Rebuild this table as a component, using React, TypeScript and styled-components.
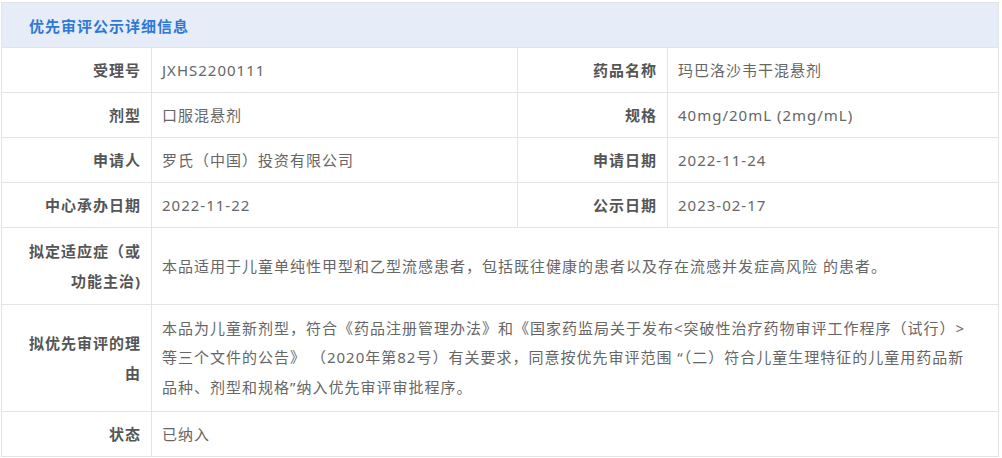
import styled, { createGlobalStyle } from "styled-components";

const GlobalStyle = createGlobalStyle`
  html, body {
    margin: 0;
    padding: 0;
    background: #fff;
  }
  body {
    font-family: "Noto Sans", "Noto Sans CJK SC", sans-serif;
  }
`;

const Page = styled.div`
  padding: 2px 3px 1px 1px;
`;

const Panel = styled.div`
  border: 1px solid #e4e4e4;
  border-bottom: none;
`;

const Header = styled.div`
  height: 44px;
  display: flex;
  align-items: center;
  padding-left: 27px;
  background: #e6edf9;
  border-bottom: 1px solid #e4e4e4;
  color: #2f78d6;
  font-size: 15px;
  letter-spacing: 1px;
  font-weight: bold;
`;

const Grid = styled.div`
  display: grid;
  grid-template-columns: 150px 366px 150px 1fr;
`;

const Label = styled.div<{ $lines?: number }>`
  display: flex;
  align-items: center;
  justify-content: flex-end;
  text-align: right;
  min-height: ${(p) => (p.$lines && p.$lines > 1 ? 30 * p.$lines + 16 : 44)}px;
  padding: 0 10px 0 12px;
  border-right: 1px solid #e4e4e4;
  border-bottom: 1px solid #e4e4e4;
  color: #555;
  font-size: 15px;
  letter-spacing: 1px;
  font-weight: bold;
  line-height: 30px;
`;

const Value = styled.div<{ $span?: boolean; $lines?: number }>`
  grid-column: ${(p) => (p.$span ? "span 3" : "auto")};
  display: flex;
  align-items: center;
  min-height: ${(p) => (p.$lines && p.$lines > 1 ? 30 * p.$lines + 16 : 44)}px;
  padding: 0 ${(p) => (p.$span ? 20 : 14)}px 0 10px;
  border-right: ${(p) => (p.$span ? "none" : "1px solid #e4e4e4")};
  border-bottom: 1px solid #e4e4e4;
  color: #666;
  font-size: 15px;
  letter-spacing: 1px;
  line-height: 30px;
  &:nth-child(4n) {
    border-right: none;
  }
`;

const Reason = styled.div`
  line-height: 29.5px;
`;

export default function App() {
  return (
    <Page>
      <GlobalStyle />
      <Panel>
        <Header>优先审评公示详细信息</Header>
        <Grid>
          <Label>受理号</Label>
          <Value>JXHS2200111</Value>
          <Label>药品名称</Label>
          <Value>玛巴洛沙韦干混悬剂</Value>

          <Label>剂型</Label>
          <Value>口服混悬剂</Value>
          <Label>规格</Label>
          <Value>40mg/20mL (2mg/mL)</Value>

          <Label>申请人</Label>
          <Value>罗氏（中国）投资有限公司</Value>
          <Label>申请日期</Label>
          <Value>2022-11-24</Value>

          <Label>中心承办日期</Label>
          <Value>2022-11-22</Value>
          <Label>公示日期</Label>
          <Value>2023-02-17</Value>

          <Label $lines={2}>拟定适应症（或功能主治)</Label>
          <Value $span $lines={2}>
            本品适用于儿童单纯性甲型和乙型流感患者，包括既往健康的患者以及存在流感并发症高风险 的患者。
          </Value>

          <Label $lines={3}>拟优先审评的理由</Label>
          <Value $span $lines={3}>
            <Reason>
              本品为儿童新剂型，符合《药品注册管理办法》和《国家药监局关于发布&lt;突破性治疗药物审评工作程序（试行）&gt;等三个文件的公告》 （2020年第82号）有关要求，同意按优先审评范围 “（二）符合儿童生理特征的儿童用药品新品种、剂型和规格”纳入优先审评审批程序。
            </Reason>
          </Value>

          <Label>状态</Label>
          <Value $span>已纳入</Value>
        </Grid>
      </Panel>
    </Page>
  );
}
